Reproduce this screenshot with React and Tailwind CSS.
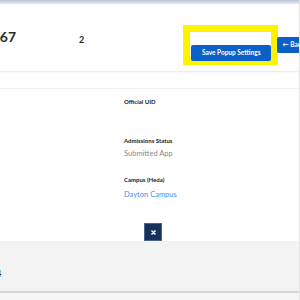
export default function App() {
  return (
    <div className="w-[300px] h-[300px] overflow-hidden bg-white flex flex-col border-r border-[#e3e3e3]"
      style={{ fontFamily: "Lato, 'Open Sans', sans-serif" }}>
      {/* top band */}
      <div className="h-[4px] shrink-0 bg-gradient-to-b from-[#b9c3da] to-[#e6eaf2]" />

      {/* header */}
      <div className="h-[68px] shrink-0 flex items-start border-b border-[#ececec] shadow-[0_1px_2px_rgba(0,0,0,0.04)]">
        <div className="w-[16px] shrink-0 flex justify-end mt-[26px]">
          <span className="whitespace-nowrap text-[14px] font-bold text-[#2b2b2b] leading-none">4567</span>
        </div>
        <span className="ml-[63px] mt-[31px] text-[9px] font-bold text-[#222] leading-none">2</span>
        <div className="ml-[99px] mt-[21px] w-[95px] h-[40px] shrink-0 border-[7px] border-[#fff200] pt-[5px] pl-[1px]">
          <button className="w-[80px] h-[16px] bg-[#0b60c8] rounded-[2px] text-white text-[6.5px] font-bold leading-none whitespace-nowrap">
            Save Popup Settings
          </button>
        </div>
        <button className="mt-[33px] ml-[-1px] h-[16px] w-[40px] shrink-0 bg-[#0b60c8] rounded-l-[2px] text-white text-[6.5px] font-bold leading-none whitespace-nowrap text-left pl-[5px]">
          ← Back
        </button>
      </div>

      {/* strip */}
      <div className="h-[17px] shrink-0 border-b border-[#efefef]" />

      {/* content */}
      <div className="h-[152px] shrink-0 pl-[124px] pt-[10px] flex flex-col">
        <span className="text-[6px] font-bold text-[#222] leading-[6px]">Official UID</span>
        <span className="mt-[33px] text-[6px] font-bold text-[#222] leading-[6px]">Admissions Status</span>
        <span className="mt-[6px] text-[7.5px] text-[#8a8a8a] leading-[8px]">Submitted App</span>
        <span className="mt-[19px] text-[6px] font-bold text-[#222] leading-[6px]">Campus (Heda)</span>
        <span className="mt-[8px] text-[7.5px] text-[#4a8fdc] leading-[8px]">Dayton Campus</span>
        <div className="mt-[24px] ml-[20px] w-[18px] h-[18px] bg-[#16325c] border border-[#4a6690] flex items-center justify-center">
          <svg width="5" height="5" viewBox="0 0 10 10" stroke="white" strokeWidth="3" strokeLinecap="square">
            <path d="M2 2l6 6M8 2l-6 6" />
          </svg>
        </div>
      </div>

      {/* footer */}
      <div className="h-[52px] shrink-0 bg-[#f3f3f3] flex items-center border-b-[2px] border-[#d6d6d6]">
        <span className="ml-[-4px] mt-[14px] text-[9px] font-bold text-[#222] leading-none">4</span>
      </div>
      <div className="flex-1 bg-[#f7f7f7]" />
    </div>
  );
}
